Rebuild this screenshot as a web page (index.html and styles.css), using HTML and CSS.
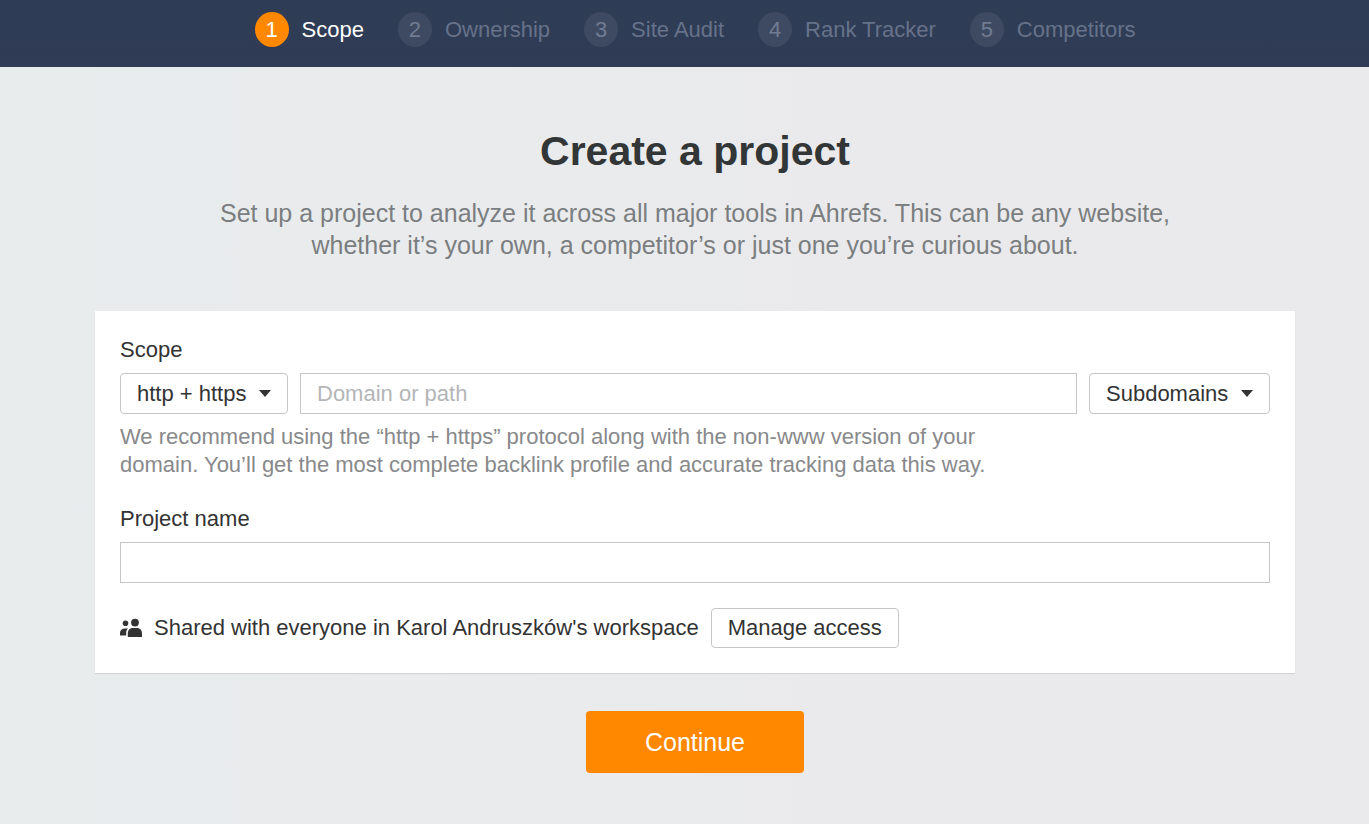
FILE: index.html
```html
<!DOCTYPE html>
<html lang="en">

<head>
    <meta charset="UTF-8">
    <meta name="viewport" content="width=device-width, initial-scale=1">
    <title>Create a project</title>
    <link rel="stylesheet" href="styles.css">
</head>

<body>
    <header class="header">
        <ol class="steps">
            <li class="step active"><span class="number">1</span>Scope</li>
            <li class="step"><span class="number">2</span>Ownership</li>
            <li class="step"><span class="number">3</span>Site Audit</li>
            <li class="step"><span class="number">4</span>Rank Tracker</li>
            <li class="step"><span class="number">5</span>Competitors</li>
        </ol>
    </header>

    <main class="main">
        <h1>Create a project</h1>
        <p class="intro">Set up a project to analyze it across all major tools in Ahrefs. This can be any website, whether it’s your own, a competitor’s or just one you’re curious about.</p>

        <form class="form">
            <div class="card">
                <label class="label" for="domain">Scope</label>
                <div class="scope">
                    <div class="dropdown">
                        <select class="control protocol" aria-label="Protocol">
                            <option>http + https</option>
                            <option>http</option>
                            <option>https</option>
                        </select>
                        <svg class="caret" viewBox="0 0 12 7"><path d="M0 0h12L6 7z" /></svg>
                    </div>
                    <input class="control domain" id="domain" type="text" placeholder="Domain or path">
                    <div class="dropdown">
                        <select class="control mode" aria-label="Mode">
                            <option>Subdomains</option>
                            <option>Path</option>
                            <option>Exact URL</option>
                        </select>
                        <svg class="caret" viewBox="0 0 12 7"><path d="M0 0h12L6 7z" /></svg>
                    </div>
                </div>
                <p class="help">We recommend using the “http + https” protocol along with the non-www version of your domain. You’ll get the most complete backlink profile and accurate tracking data this way.</p>

                <label class="label" for="name">Project name</label>
                <input class="control name" id="name" type="text">

                <div class="access">
                    <svg class="people" viewBox="0 0 22 20">
                        <circle cx="5.5" cy="5.2" r="2.8" />
                        <path d="M0 17.500v-2.500c0-3 2-4.500 5-4.500h3c-1.300 1.200-1.800 2.500-1.800 4.500v2.500z" />
                        <circle cx="15" cy="4.600" r="3.900" />
                        <path d="M7.800 19v-3.500c0-3.700 2.200-5.500 5.700-5.500h2.800c3.500 0 5.700 1.800 5.700 5.500V19z" />
                    </svg>
                    <span>Shared with everyone in Karol Andruszków's workspace</span>
                    <button class="manage" type="button">Manage access</button>
                </div>
            </div>
            <button class="continue" type="submit">Continue</button>
        </form>
    </main>
</body>

</html>
```

FILE: styles.css
```css
* {
    box-sizing: border-box;
}

body {
    margin: 0;
    min-height: 100vh;
    background: linear-gradient(90deg, #e8eced, #eaeaec 60%);
    color: #333;
    font-family: "Liberation Sans", Arial, sans-serif;
    font-size: 22px;
    line-height: 28px;
}

.header {
    padding: 12px 0 20px 21px;
    background: linear-gradient(#2e3d55, #303b55);
}

.steps {
    display: flex;
    justify-content: center;
    gap: 34px;
    margin: 0;
    padding: 0;
    list-style: none;
}

.step {
    display: flex;
    align-items: center;
    gap: 13px;
    color: #66728a;
}

.number {
    display: flex;
    align-items: center;
    justify-content: center;
    width: 34px;
    height: 35px;
    border-radius: 50%;
    background: #3e4a62;
    color: #717c92;
}

.active {
    color: #fff;
}

.active .number {
    background: #ff8800;
    color: #fff;
}

.main {
    display: flex;
    flex-direction: column;
    align-items: center;
    padding: 60px 0 50px 21px;
}

h1 {
    margin: 0 0 22px;
    color: #323637;
    font-size: 41px;
    line-height: 48px;
}

.intro {
    max-width: 980px;
    margin: 0 0 50px;
    color: #7b7e80;
    font-size: 25px;
    line-height: 32px;
    text-align: center;
}

.form {
    display: flex;
    flex-direction: column;
    align-items: center;
    gap: 38px;
    width: 100%;
    max-width: 1200px;
}

.card {
    width: 100%;
    padding: 25px;
    background: #fff;
    box-shadow: 0 1px 1px #d3d4d6;
}

.label {
    display: block;
    margin-bottom: 9px;
}

.scope {
    display: flex;
    gap: 12px;
}

.dropdown {
    position: relative;
}

.control {
    display: block;
    height: 41px;
    padding: 0 16px;
    border: 1px solid #c5c6c8;
    background: #fff;
    color: #333;
    font: inherit;
}

select.control {
    appearance: none;
    border-radius: 4px;
}

.protocol {
    width: 168px;
}

.mode {
    width: 181px;
}

.domain {
    flex: 1;
    min-width: 0;
}

.domain::placeholder {
    color: #b4b5b7;
}

.name {
    width: 100%;
}

.caret {
    position: absolute;
    top: 17px;
    right: 17px;
    width: 12px;
    height: 7px;
    fill: #333;
    pointer-events: none;
}

.help {
    max-width: 880px;
    margin: 9px 0 26px;
    color: #88898b;
}

.access {
    display: flex;
    align-items: center;
    gap: 12px;
    margin-top: 25px;
}

.people {
    width: 22px;
    height: 20px;
    fill: #333;
}

.manage {
    height: 40px;
    padding: 0 16px;
    border: 1px solid #c5c6c8;
    border-radius: 4px;
    background: #fff;
    color: #333;
    font: inherit;
}

.continue {
    width: 218px;
    height: 62px;
    border: 0;
    border-radius: 4px;
    background: #ff8800;
    color: #fff;
    font-family: inherit;
    font-size: 25px;
}
```
